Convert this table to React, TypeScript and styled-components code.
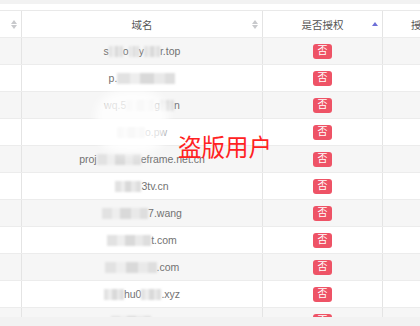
import React from 'react';
import styled, { createGlobalStyle } from 'styled-components';

type Seg = string | number;

// each domain: visible pieces are strings, masked pieces are widths in px
const rows: Seg[][] = [
  ['s', 14, 'o', 10, 'y', 16, 'r.top'],
  ['p.', 58],
  ['wq.5', 28, 'g', 14, 'n'],
  [28, 'o.pw'],
  ['proj', 44, 'eframe.net.cn'],
  [26, '3tv.cn'],
  [46, '7.wang'],
  [44, 't.com'],
  [52, '.com'],
  [20, 'hu0', 20, '.xyz'],
  [40, '.com'],
];

const GlobalStyle = createGlobalStyle`
  html, body {
    margin: 0;
    padding: 0;
    background: #f2f2f2;
    overflow: hidden;
  }
  body {
    font-family: "Liberation Sans", "Noto Sans CJK SC", Arial, sans-serif;
  }
`;

const Page = styled.div`
  width: 420px;
  height: 326px;
  padding-top: 4px;
  box-sizing: border-box;
`;

const Card = styled.div`
  position: relative;
  height: 313px;
  padding-top: 6px;
  box-sizing: border-box;
  background: #fff;
  overflow: hidden;
`;

const Grid = styled.div`
  width: 503px;
`;

const Row = styled.div<{ $striped?: boolean; $head?: boolean }>`
  display: grid;
  grid-template-columns: 22px 241px 120px 120px;
  height: ${p => (p.$head ? 28 : 27)}px;
  box-sizing: border-box;
  border-top: ${p => (p.$head ? '1px solid #e9e9e9' : 'none')};
  border-bottom: 1px solid #ececec;
  background: ${p => (p.$striped ? '#f6f6f6' : '#fff')};
`;

const Cell = styled.div`
  display: flex;
  align-items: center;
  justify-content: center;
  border-right: 1px solid #e4e4e4;
  font-size: 10.5px;
  color: #727272;
  white-space: nowrap;
  overflow: hidden;
`;

const HeadCell = styled(Cell)`
  justify-content: flex-end;
  padding-right: 4px;
  color: #555;
  font-size: 10.5px;
`;

const HeadLabel = styled.span`
  flex: 1;
  text-align: center;
  padding-left: 10px;
`;

const CutLabel = styled.span`
  flex: 1;
  text-align: left;
  padding-left: 28px;
  color: #555;
  font-size: 10.5px;
`;

const SortIcon = styled.span`
  display: flex;
  flex-direction: column;
  align-items: center;
  gap: 1px;
  width: 6px;
`;

const Caret = styled.span<{ $dir: 'up' | 'down'; $on?: boolean }>`
  width: 0;
  height: 0;
  border-left: 3px solid transparent;
  border-right: 3px solid transparent;
  ${p =>
    p.$dir === 'up'
      ? `border-bottom: 4px solid ${p.$on ? '#6d6fd8' : '#c8c9cc'};`
      : `border-top: 4px solid ${p.$on ? '#6d6fd8' : '#c8c9cc'};`}
`;

const Mask = styled.span<{ $w: number }>`
  display: inline-block;
  width: ${p => p.$w}px;
  height: 11px;
  vertical-align: middle;
  background: linear-gradient(
    90deg,
    #e2e2e2 0 22%,
    #eeeeee 22% 40%,
    #d9d9d9 40% 63%,
    #e9e9e9 63% 82%,
    #dedede 82%
  );
  filter: blur(0.8px);
`;

const Badge = styled.span`
  display: inline-flex;
  align-items: center;
  justify-content: center;
  width: 19px;
  height: 15px;
  border-radius: 3px;
  background: #ee5366;
  color: #fff;
  font-size: 10px;
  line-height: 1;
`;

const Stamp = styled.div`
  position: absolute;
  left: 178px;
  top: 131px;
  font-size: 23.5px;
  line-height: 1;
  color: #ff2222;
  font-family: "Noto Sans CJK SC", sans-serif;
`;

const Smear = styled.div`
  position: absolute;
  left: 96px;
  top: 86px;
  width: 72px;
  height: 64px;
  background: rgba(255, 255, 255, 0.8);
  border-radius: 40%;
  filter: blur(5px);
`;

const Domain = ({ segs }: { segs: Seg[] }) => (
  <span>
    {segs.map((s, i) => (typeof s === 'number' ? <Mask key={i} $w={s} /> : <span key={i}>{s}</span>))}
  </span>
);

export default function App() {
  return (
    <Page>
      <GlobalStyle />
      <Card>
        <Grid>
          <Row $head>
            <HeadCell>
              <SortIcon>
                <Caret $dir="up" />
                <Caret $dir="down" />
              </SortIcon>
            </HeadCell>
            <HeadCell>
              <HeadLabel>域名</HeadLabel>
              <SortIcon>
                <Caret $dir="up" />
                <Caret $dir="down" />
              </SortIcon>
            </HeadCell>
            <HeadCell>
              <HeadLabel>是否授权</HeadLabel>
              <SortIcon>
                <Caret $dir="up" $on />
              </SortIcon>
            </HeadCell>
            <HeadCell>
              <CutLabel>授权时间</CutLabel>
            </HeadCell>
          </Row>
          {rows.map((segs, i) => (
            <Row key={i} $striped={i % 2 === 0}>
              <Cell />
              <Cell>
                <Domain segs={segs} />
              </Cell>
              <Cell>
                <Badge>否</Badge>
              </Cell>
              <Cell />
            </Row>
          ))}
        </Grid>
        <Smear />
        <Stamp>盗版用户</Stamp>
      </Card>
    </Page>
  );
}
